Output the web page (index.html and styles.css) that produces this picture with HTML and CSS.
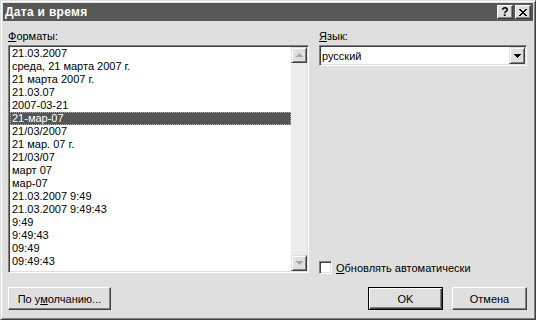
FILE: index.html
```html
<!DOCTYPE html>
<html lang="ru">
<head>
    <meta charset="UTF-8">
    <title>Дата и время</title>
    <link rel="stylesheet" href="styles.css">
</head>
<body>
    <div class="window">
        <div class="titlebar">
            <span class="title">Дата и время</span>
            <div class="title-btns">
                <button class="tbtn help">?</button>
                <button class="tbtn close">
                    <svg width="8" height="7" viewBox="0 0 8 7" shape-rendering="crispEdges">
                        <path d="M0 0h2v1h1v1h2V1h1V0h2v1H7v1H6v1H5v1h1v1h1v1h1v1H6V6H5V5H3v1H2v1H0V6h1V5h1V4h1V3H2V2H1V1H0z" fill="#000"/>
                    </svg>
                </button>
            </div>
        </div>

        <div class="content">
            <div class="cols">
                <div class="col">
                    <div class="lbl"><u>Ф</u>орматы:</div>
                    <div class="listbox">
                        <ul class="items">
                            <li>21.03.2007</li>
                            <li>среда, 21 марта 2007 г.</li>
                            <li>21 марта 2007 г.</li>
                            <li>21.03.07</li>
                            <li>2007-03-21</li>
                            <li class="selected">21-мар-07</li>
                            <li>21/03/2007</li>
                            <li>21 мар. 07 г.</li>
                            <li>21/03/07</li>
                            <li>март 07</li>
                            <li>мар-07</li>
                            <li>21.03.2007 9:49</li>
                            <li>21.03.2007 9:49:43</li>
                            <li>9:49</li>
                            <li>9:49:43</li>
                            <li>09:49</li>
                            <li>09:49:43</li>
                        </ul>
                        <div class="vscroll">
                            <span class="sbtn">
                                <svg width="7" height="4" viewBox="0 0 7 4" shape-rendering="crispEdges">
                                    <path d="M3 0h1v1h1v1h1v1h1v1H0V3h1V2h1V1h1z" fill="#a8a8a8"/>
                                </svg>
                            </span>
                            <span class="track"></span>
                            <span class="sbtn">
                                <svg width="7" height="4" viewBox="0 0 7 4" shape-rendering="crispEdges">
                                    <path d="M0 0h7v1H6v1H5v1H4v1H3V3H2V2H1V1H0z" fill="#a8a8a8"/>
                                </svg>
                            </span>
                        </div>
                    </div>
                </div>

                <div class="col right">
                    <div class="lbl"><u>Я</u>зык:</div>
                    <div class="combo">
                        <span class="value">русский</span>
                        <span class="dd">
                            <svg width="7" height="4" viewBox="0 0 7 4" shape-rendering="crispEdges">
                                <path d="M0 0h7v1H6v1H5v1H4v1H3V3H2V2H1V1H0z" fill="#000"/>
                            </svg>
                        </span>
                    </div>
                    <label class="check">
                        <span class="box"></span>
                        <span><u>О</u>бновлять автоматически</span>
                    </label>
                </div>
            </div>

            <div class="buttons">
                <button class="btn wide">По у<u>м</u>олчанию...</button>
                <span class="spacer"></span>
                <button class="btn default">OK</button>
                <button class="btn">Отмена</button>
            </div>
        </div>
    </div>
</body>
</html>
```

FILE: styles.css
```css
body {
    margin: 0;
    font-family: "Liberation Sans", Arial, sans-serif;
    font-size: 11px;
    color: #000;
    background: #dfdfdf;
}
.window {
    width: 536px;
    height: 320px;
    box-sizing: border-box;
    border: 1px solid;
    border-color: #dfdfdf #404040 #404040 #dfdfdf;
    box-shadow: inset 1px 1px #fff, inset -1px -1px #808080;
    padding: 2px;
    background: #dfdfdf;
    display: flex;
    flex-direction: column;
}

/* title bar */
.titlebar {
    height: 18px;
    background: #575757;
    display: flex;
    align-items: center;
    justify-content: space-between;
    padding: 0 2px 0 2px;
}
.title {
    color: #fff;
    font-weight: bold;
    font-size: 12px;
    letter-spacing: 0.3px;
}
.title-btns {
    display: flex;
    gap: 2px;
}
.tbtn {
    width: 16px;
    height: 14px;
    padding: 0;
    margin: 0;
    box-sizing: border-box;
    background: #dfdfdf;
    border: 1px solid;
    border-color: #fff #404040 #404040 #fff;
    box-shadow: inset -1px -1px #808080;
    font-family: "Liberation Sans", Arial, sans-serif;
    font-weight: bold;
    font-size: 12px;
    line-height: 11px;
    display: flex;
    align-items: center;
    justify-content: center;
}

/* main area */
.content {
    flex: 1;
    display: flex;
    flex-direction: column;
    padding: 9px 6px 7px 5px;
}
.cols {
    display: grid;
    grid-template-columns: 301px 1fr;
    column-gap: 10px;
}
.col {
    display: flex;
    flex-direction: column;
}
.lbl {
    line-height: 13px;
    height: 13px;
    margin-bottom: 2px;
}

/* list box */
.listbox {
    height: 228px;
    box-sizing: border-box;
    border: 1px solid;
    border-color: #808080 #fff #fff #808080;
    box-shadow: inset 1px 1px #404040, inset -1px -1px #dfdfdf;
    padding: 1px;
    background: #fff;
    display: flex;
}
.items {
    flex: 1;
    list-style: none;
    margin: 0;
    padding: 0;
    overflow: hidden;
}
.items li {
    height: 13px;
    line-height: 13px;
    padding-left: 2px;
    white-space: nowrap;
}
.items li.selected {
    background: #555;
    color: #fff;
    outline: 1px dotted #b0b0b0;
    outline-offset: -1px;
}
.vscroll {
    width: 16px;
    display: flex;
    flex-direction: column;
    background: #ececec;
}
.track {
    flex: 1;
}
.sbtn {
    width: 16px;
    height: 16px;
    box-sizing: border-box;
    background: #dfdfdf;
    border: 1px solid;
    border-color: #dfdfdf #404040 #404040 #dfdfdf;
    box-shadow: inset 1px 1px #fff, inset -1px -1px #808080;
    display: flex;
    align-items: center;
    justify-content: center;
}

/* right column */
.right {
    height: 243px;
}
.combo {
    height: 21px;
    box-sizing: border-box;
    border: 1px solid;
    border-color: #808080 #fff #fff #808080;
    box-shadow: inset 1px 1px #404040, inset -1px -1px #dfdfdf;
    padding: 1px;
    background: #fff;
    display: flex;
    align-items: center;
}
.value {
    flex: 1;
    padding-left: 1px;
}
.dd {
    width: 16px;
    height: 17px;
    box-sizing: border-box;
    background: #dfdfdf;
    border: 1px solid;
    border-color: #dfdfdf #404040 #404040 #dfdfdf;
    box-shadow: inset 1px 1px #fff, inset -1px -1px #808080;
    display: flex;
    align-items: center;
    justify-content: center;
}
.check {
    margin-top: auto;
    display: flex;
    align-items: center;
    gap: 4px;
    height: 13px;
    margin-bottom: -1px;
}
.box {
    width: 13px;
    height: 13px;
    box-sizing: border-box;
    border: 1px solid;
    border-color: #808080 #fff #fff #808080;
    box-shadow: inset 1px 1px #404040, inset -1px -1px #dfdfdf;
    background: #fff;
}

/* bottom buttons */
.buttons {
    margin-top: 14px;
    display: flex;
    gap: 9px;
}
.spacer {
    flex: 1;
}
.btn {
    width: 75px;
    height: 23px;
    box-sizing: border-box;
    padding: 0;
    margin: 0;
    background: #dfdfdf;
    border: 1px solid;
    border-color: #fff #404040 #404040 #fff;
    box-shadow: inset -1px -1px #808080;
    font-family: "Liberation Sans", Arial, sans-serif;
    font-size: 11px;
    color: #000;
}
.btn.wide {
    width: 103px;
}
.btn.default {
    border: 1px solid #000;
    box-shadow: inset 1px 1px #fff, inset -1px -1px #404040, inset -2px -2px #808080;
}
```
